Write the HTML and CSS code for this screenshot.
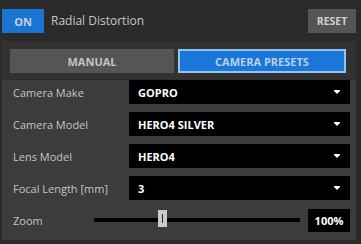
FILE: index.html
```html
<!DOCTYPE html>
<html>
<head>
<meta charset="utf-8">
<link rel="stylesheet" href="styles.css">
</head>
<body>
<div class="app">
  <div class="header">
    <button class="on-btn">ON</button>
    <span class="title">Radial Distortion</span>
    <button class="reset-btn">RESET</button>
  </div>
  <div class="panel">
    <div class="tabs">
      <div class="tab">MANUAL</div>
      <div class="tab active">CAMERA PRESETS</div>
    </div>
    <div class="rows">
      <div class="row">
        <span class="label">Camera Make</span>
        <div class="select"><span>GOPRO</span><svg class="arrow" width="6" height="4" viewBox="0 0 6 4"><rect x="0" y="0" width="6" height="1" fill="#fff"/><polygon points="0,1 6,1 3,4" fill="#fff"/></svg></div>
      </div>
      <div class="row">
        <span class="label">Camera Model</span>
        <div class="select"><span>HERO4 SILVER</span><svg class="arrow" width="6" height="4" viewBox="0 0 6 4"><rect x="0" y="0" width="6" height="1" fill="#fff"/><polygon points="0,1 6,1 3,4" fill="#fff"/></svg></div>
      </div>
      <div class="row">
        <span class="label">Lens Model</span>
        <div class="select"><span>HERO4</span><svg class="arrow" width="6" height="4" viewBox="0 0 6 4"><rect x="0" y="0" width="6" height="1" fill="#fff"/><polygon points="0,1 6,1 3,4" fill="#fff"/></svg></div>
      </div>
      <div class="row">
        <span class="label">Focal Length [mm]</span>
        <div class="select"><span>3</span><svg class="arrow" width="6" height="4" viewBox="0 0 6 4"><rect x="0" y="0" width="6" height="1" fill="#fff"/><polygon points="0,1 6,1 3,4" fill="#fff"/></svg></div>
      </div>
      <div class="row zoom-row">
        <span class="label zoom-label">Zoom</span>
        <div class="slider">
          <div class="track"></div>
          <div class="thumb"><div class="thumb-line"></div></div>
        </div>
        <div class="value">100%</div>
      </div>
    </div>
  </div>
</div>
</body>
</html>
```
FILE: styles.css
```css
* { box-sizing: border-box; }
html, body {
  margin: 0;
  padding: 0;
  background: #2a2a2a;
  font-family: "Open Sans", "Noto Sans", sans-serif;
}
.app {
  width: 361px;
  height: 244px;
  background: #2a2a2a;
}
.header {
  height: 41px;
  display: flex;
  align-items: flex-start;
  padding: 9px 5px 0 2px;
}
button {
  font-family: inherit;
  border: none;
  margin: 0;
  padding: 0;
}
.on-btn {
  width: 42px;
  height: 24px;
  background: #1a74d2;
  color: #c6d0da;
  font-weight: bold;
  font-size: 11px;
}
.title {
  margin-left: 7px;
  line-height: 24px;
  font-size: 12px;
  color: #c8c8c8;
  flex: 1;
}
.reset-btn {
  width: 48px;
  height: 24px;
  background: #555555;
  color: #d0d0d0;
  font-weight: bold;
  font-size: 10.5px;
}
.panel {
  margin: 0 5px 0 2px;
  height: 199px;
  background: #3c3c3c;
  display: flex;
  flex-direction: column;
}
.tabs {
  background: #323232;
  display: flex;
  gap: 4px;
  padding: 8px 10px 7px 8px;
  height: 39px;
  border-bottom: 1px solid #2e2e2e;
}
.tab {
  flex: 1;
  height: 24px;
  background: #555555;
  color: #c4c4c4;
  font-weight: bold;
  font-size: 11px;
  display: flex;
  align-items: center;
  justify-content: center;
}
.tab.active {
  background: #1a76d8;
  border: 2px solid #92c4f0;
  color: #b8d0ea;
}
.rows {
  display: flex;
  flex-direction: column;
  gap: 8px;
  padding: 0 6px 0 11px;
}
.row {
  display: flex;
  align-items: center;
  height: 24px;
}
.label {
  width: 116px;
  font-size: 11px;
  color: #c4c4c4;
}
.select {
  flex: 1;
  height: 24px;
  background: #000;
  display: flex;
  align-items: center;
  justify-content: space-between;
  padding: 0 10px 0 9px;
  color: #fff;
  font-weight: bold;
  font-size: 11px;
}
.arrow { display: block; }
.zoom-row { margin-top: 0; }
.zoom-label { width: 81px; }
.slider {
  position: relative;
  width: 206px;
  height: 24px;
  display: flex;
  align-items: center;
}
.track {
  width: 100%;
  height: 4px;
  background: #000;
}
.thumb {
  position: absolute;
  left: 64px;
  top: 2px;
  width: 9px;
  height: 17px;
  background: #cccccc;
  display: flex;
  justify-content: center;
  align-items: center;
}
.thumb-line {
  width: 1px;
  height: 9px;
  background: #222;
}
.value {
  margin-left: 8px;
  width: 42px;
  height: 23px;
  background: #000;
  color: #fff;
  font-size: 11px;
  font-weight: bold;
  display: flex;
  align-items: center;
  justify-content: center;
}
```
